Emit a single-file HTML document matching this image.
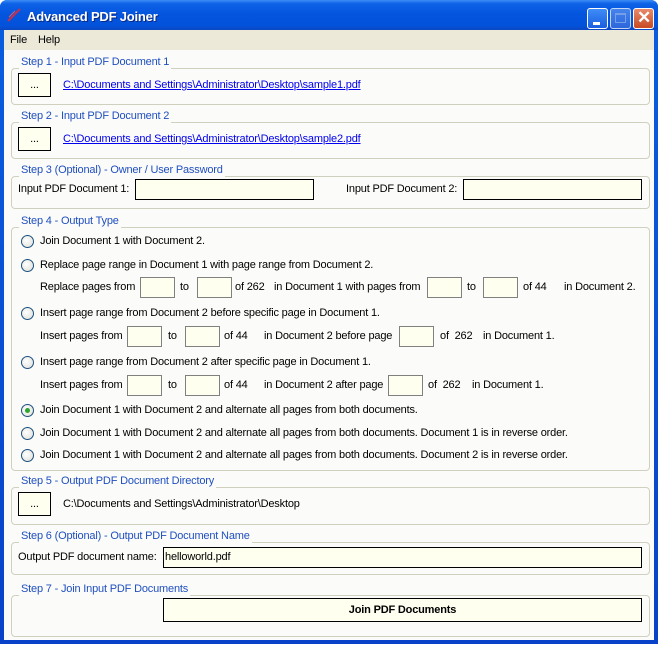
<!DOCTYPE html>
<html><head><meta charset="utf-8"><style>
*{box-sizing:border-box;margin:0;padding:0}
body{width:661px;height:648px;background:#fff;font-family:"Liberation Sans",sans-serif;font-size:11px;letter-spacing:-0.18px;color:#000;position:relative;overflow:hidden}
.a{position:absolute;white-space:nowrap}
.win{position:absolute;left:0;top:0;width:658px;height:644px;background:linear-gradient(#0a5ee0,#0842c8);border-radius:7px 7px 0 0}
.title{position:absolute;left:0;top:0;width:658px;height:30px;border-radius:7px 7px 0 0;background:linear-gradient(#3d8df5 0%,#0d62e6 12%,#0454de 50%,#0352dc 85%,#0a46c0 100%)}
.client{position:absolute;left:4px;top:30px;width:650px;height:610px;background:#fbfbf9}
.menu{position:absolute;left:4px;top:30px;width:650px;height:20px;background:#ece9d8}
.g{position:absolute;border:1px solid #d0d0bf;border-radius:4px}
.lg{position:absolute;background:#fbfbf9;color:#1f4fc0;padding:0 2px;line-height:13px}
.in{position:absolute;background:#fffff0;border:1px solid #808080}
.ib{position:absolute;background:#fffff0;border:1px solid #000}
.btn{position:absolute;background:#fffff0;border:1px solid #000;text-align:center}
.r{position:absolute;width:13px;height:13px;border-radius:50%;border:1px solid #1c5180;background:radial-gradient(circle at 40% 40%,#fff,#dcdcd6)}
.lk{color:#0000ee;text-decoration:underline}
.wb{position:absolute;top:8px;width:21px;height:21px;border:1px solid #fff;border-radius:3px}
</style></head><body>
<div class="win"></div>
<div class="title"></div>
<svg class="a" style="left:6px;top:7px" width="16" height="16"><path d="M2 14 L14 2" stroke="#c03050" stroke-width="2"/><path d="M3 10 L9 4" stroke="#d06070" stroke-width="1"/></svg>
<div class="a" style="left:27px;top:9px;color:#fff;font-weight:bold;font-size:13px;letter-spacing:-0.2px;text-shadow:1px 1px #0a2a80">Advanced PDF Joiner</div>
<div class="wb" style="left:587px;background:linear-gradient(#3f8cf7,#1a5fe0)"><div class="a" style="left:5px;top:13px;width:7px;height:3px;background:#fff"></div></div>
<div class="wb" style="left:610px;background:linear-gradient(#5b92f0,#3a6fdc);opacity:.75"><div class="a" style="left:4px;top:4px;width:11px;height:10px;border:1px solid #9cb8ef;border-top-width:2px"></div></div>
<div class="wb" style="left:633px;background:linear-gradient(#e88a6a,#c84a24)"><div class="a" style="left:3px;top:-1px;color:#fff;font-size:17px;font-weight:bold">✕</div></div>
<div class="client"></div>
<div class="menu"></div>
<div class="a" style="left:10px;top:34px">File</div>
<div class="a" style="left:38px;top:34px">Help</div>

<div class="g" style="left:11px;top:68px;width:639px;height:37px"></div>
<div class="lg" style="left:19px;top:56px">Step 1 - Input PDF Document 1</div>
<div class="btn" style="left:18px;top:73px;width:33px;height:24px;line-height:22px">...</div>
<div class="a lk" style="left:63px;top:79px">C:\Documents and Settings\Administrator\Desktop\sample1.pdf</div>

<div class="g" style="left:11px;top:122px;width:639px;height:37px"></div>
<div class="lg" style="left:19px;top:110px">Step 2 - Input PDF Document 2</div>
<div class="btn" style="left:18px;top:127px;width:33px;height:24px;line-height:22px">...</div>
<div class="a lk" style="left:63px;top:133px">C:\Documents and Settings\Administrator\Desktop\sample2.pdf</div>

<div class="g" style="left:11px;top:176px;width:639px;height:33px"></div>
<div class="lg" style="left:19px;top:164px">Step 3 (Optional) - Owner / User Password</div>
<div class="a" style="left:18px;top:183px">Input PDF Document 1:</div>
<div class="ib" style="left:135px;top:179px;width:179px;height:21px"></div>
<div class="a" style="left:346px;top:183px">Input PDF Document 2:</div>
<div class="ib" style="left:463px;top:179px;width:179px;height:21px"></div>

<div class="g" style="left:11px;top:227px;width:639px;height:244px"></div>
<div class="lg" style="left:19px;top:215px">Step 4 - Output Type</div>
<div class="r" style="left:21px;top:235px"></div><div class="a" style="left:40px;top:235px">Join Document 1 with Document 2.</div>
<div class="r" style="left:21px;top:259px"></div><div class="a" style="left:40px;top:259px">Replace page range in Document 1 with page range from Document 2.</div>
<div class="a" style="left:40px;top:281px">Replace pages from</div>
<div class="in" style="left:140px;top:277px;width:35px;height:21px"></div>
<div class="a" style="left:180px;top:281px">to</div>
<div class="in" style="left:197px;top:277px;width:35px;height:21px"></div>
<div class="a" style="left:235px;top:281px">of 262</div>
<div class="a" style="left:274px;top:281px">in Document 1 with pages from</div>
<div class="in" style="left:427px;top:277px;width:35px;height:21px"></div>
<div class="a" style="left:467px;top:281px">to</div>
<div class="in" style="left:483px;top:277px;width:35px;height:21px"></div>
<div class="a" style="left:523px;top:281px">of 44</div>
<div class="a" style="left:564px;top:281px">in Document 2.</div>

<div class="r" style="left:21px;top:307px"></div><div class="a" style="left:40px;top:307px">Insert page range from Document 2 before specific page in Document 1.</div>
<div class="a" style="left:40px;top:330px">Insert pages from</div>
<div class="in" style="left:127px;top:326px;width:35px;height:21px"></div>
<div class="a" style="left:168px;top:330px">to</div>
<div class="in" style="left:185px;top:326px;width:35px;height:21px"></div>
<div class="a" style="left:224px;top:330px">of 44</div>
<div class="a" style="left:264px;top:330px">in Document 2 before page</div>
<div class="in" style="left:399px;top:326px;width:35px;height:21px"></div>
<div class="a" style="left:440px;top:330px">of&nbsp; 262</div>
<div class="a" style="left:483px;top:330px">in Document 1.</div>

<div class="r" style="left:21px;top:356px"></div><div class="a" style="left:40px;top:356px">Insert page range from Document 2 after specific page in Document 1.</div>
<div class="a" style="left:40px;top:379px">Insert pages from</div>
<div class="in" style="left:127px;top:375px;width:35px;height:21px"></div>
<div class="a" style="left:168px;top:379px">to</div>
<div class="in" style="left:185px;top:375px;width:35px;height:21px"></div>
<div class="a" style="left:224px;top:379px">of 44</div>
<div class="a" style="left:264px;top:379px">in Document 2 after page</div>
<div class="in" style="left:388px;top:375px;width:35px;height:21px"></div>
<div class="a" style="left:428px;top:379px">of&nbsp; 262</div>
<div class="a" style="left:472px;top:379px">in Document 1.</div>

<div class="r" style="left:21px;top:404px"><div class="a" style="left:3px;top:3px;width:5px;height:5px;border-radius:50%;background:#2fa52f"></div></div><div class="a" style="left:40px;top:404px">Join Document 1 with Document 2 and alternate all pages from both documents.</div>
<div class="r" style="left:21px;top:427px"></div><div class="a" style="left:40px;top:427px">Join Document 1 with Document 2 and alternate all pages from both documents. Document 1 is in reverse order.</div>
<div class="r" style="left:21px;top:449px"></div><div class="a" style="left:40px;top:449px">Join Document 1 with Document 2 and alternate all pages from both documents. Document 2 is in reverse order.</div>

<div class="g" style="left:11px;top:487px;width:639px;height:38px"></div>
<div class="lg" style="left:19px;top:475px">Step 5 - Output PDF Document Directory</div>
<div class="btn" style="left:18px;top:492px;width:33px;height:24px;line-height:22px">...</div>
<div class="a" style="left:63px;top:498px">C:\Documents and Settings\Administrator\Desktop</div>

<div class="g" style="left:11px;top:542px;width:639px;height:33px"></div>
<div class="lg" style="left:19px;top:530px">Step 6 (Optional) - Output PDF Document Name</div>
<div class="a" style="left:18px;top:551px">Output PDF document name:</div>
<div class="ib" style="left:163px;top:547px;width:479px;height:21px;padding:3px 1px">helloworld.pdf</div>

<div class="g" style="left:11px;top:595px;width:639px;height:42px"></div>
<div class="lg" style="left:19px;top:583px">Step 7 - Join Input PDF Documents</div>
<div class="btn" style="left:163px;top:598px;width:479px;height:24px;line-height:22px;font-weight:bold">Join PDF Documents</div>
</body></html>
